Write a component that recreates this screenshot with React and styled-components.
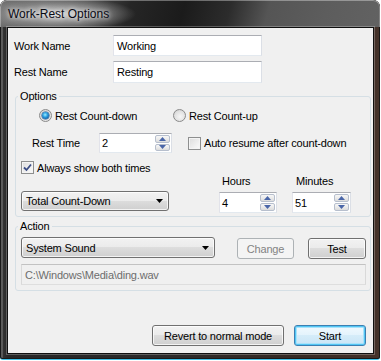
import React from "react";
import styled, { createGlobalStyle, css } from "styled-components";

const GlobalStyle = createGlobalStyle`
  html, body {
    margin: 0;
    padding: 0;
    background: #ffffff;
  }

  body {
    font-family: "Liberation Sans", Arial, sans-serif;
    font-size: 11px;
    letter-spacing: -0.18px;
    color: #000;
  }
`;

const Window = styled.div`
  width: 380px;
  height: 360px;
  box-sizing: border-box;
  display: flex;
  flex-direction: column;
  padding: 0 6px 5px 7px;
  border-radius: 7px 7px 3px 3px;
  border-bottom: 1px solid #3fc2ea;
  background: linear-gradient(
    to right,
    #3c3c3c 0%,
    #262626 2%,
    #2a2a2a 40%,
    #362a23 80%,
    #45322a 100%
  );
  box-shadow: inset 0 0 0 1px #181818, inset 1px 1px 0 2px rgba(255, 255, 255, 0.18);
`;

const TitleBar = styled.div`
  height: 27px;
  flex: none;
  display: flex;
  align-items: center;
  margin: 0 -6px 0 -7px;
  padding: 1px 0 0 8px;
  box-sizing: border-box;
  border-radius: 7px 7px 0 0;
  background:
    radial-gradient(ellipse 78px 17px at 58px 14px, rgba(214, 214, 214, 0.95), rgba(150, 150, 150, 0.55) 65%, rgba(120, 120, 120, 0) 100%),
    linear-gradient(
      105deg,
      #707070 0%,
      #505050 22%,
      #262626 34%,
      #1b1b1b 48%,
      #2c2c2c 60%,
      #555555 70%,
      #5d5d5d 85%,
      #626262 100%
    );
  box-shadow: inset 0 1px 0 rgba(255, 255, 255, 0.35), inset 1px 0 0 rgba(255, 255, 255, 0.3), inset -1px 0 0 rgba(255, 255, 255, 0.2);
`;

const Title = styled.span`
  font-size: 12px;
  letter-spacing: 0;
  color: #0a0a14;
  text-shadow: 0 0 4px rgba(255, 255, 255, 0.9), 0 0 8px rgba(255, 255, 255, 0.6);
`;

const Client = styled.div`
  flex: 1;
  display: flex;
  flex-direction: column;
  background: #f0f0f0;
  border: 1px solid #101010;
  box-shadow: 0 0 0 1px rgba(255, 255, 255, 0.25);
  padding: 7px 7px 7px 0;
`;

const NameRow = styled.div`
  display: flex;
  align-items: center;
  height: 21px;
  padding-left: 6px;
  & + & {
    margin-top: 5px;
  }
`;

const Label = styled.span`
  width: ${(p) => p.$w || "auto"};
  margin-left: ${(p) => p.$ml || 0}px;
  flex: none;
  white-space: nowrap;
`;

const fieldBorder = css`
  box-sizing: border-box;
  border: 1px solid;
  border-color: #abadb3 #dbdfe6 #e3e9ef #e2e3ea;
  background: #fff;
`;

const TextBox = styled.div`
  ${fieldBorder}
  width: ${(p) => p.$w}px;
  height: ${(p) => p.$h || 21}px;
  padding-left: 3px;
  display: flex;
  align-items: center;
  ${(p) =>
    p.$disabled &&
    css`
      background: #f0f0f0;
      border-color: #c2c2c2 #d9d9d9 #dedede #d9d9d9;
      color: #6d6d6d;
    `}
`;

const Group = styled.fieldset`
  margin: ${(p) => p.$mt || 0}px 0 0 7px;
  width: 356px;
  box-sizing: border-box;
  border: 1px solid #d5dfe5;
  border-radius: 3px;
  padding: ${(p) => p.$pad};
  min-width: 0;
`;

const Legend = styled.legend`
  padding: 0 2px;
  line-height: 13px;
  margin-left: -3px;
`;

const Row = styled.div`
  display: flex;
  align-items: ${(p) => p.$align || "center"};
  height: ${(p) => (p.$h ? `${p.$h}px` : "auto")};
  margin-top: ${(p) => p.$mt || 0}px;
  padding-left: ${(p) => p.$pl || 0}px;
`;

const Choice = styled.label`
  display: flex;
  align-items: center;
  gap: 3px;
  width: ${(p) => (p.$w ? `${p.$w}px` : "auto")};
  margin-left: ${(p) => p.$ml || 0}px;
  flex: none;
  white-space: nowrap;
`;

const RadioCircle = styled.span`
  width: 13px;
  height: 13px;
  box-sizing: border-box;
  border-radius: 50%;
  border: 1px solid #8a8a8a;
  background: radial-gradient(circle at 55% 60%, #f6f6f6 0%, #e2e2e2 55%, #c9c9c9 100%);
  display: flex;
  align-items: center;
  justify-content: center;
`;

const RadioDot = styled.span`
  width: 7px;
  height: 7px;
  border-radius: 50%;
  background: radial-gradient(circle at 45% 40%, #9ff0ff 0%, #2d9fe0 40%, #0d5fa8 75%, #0a3f78 100%);
  box-shadow: 0 0 0 0.5px #1d4f85;
`;

const CheckBox = styled.span`
  width: 13px;
  height: 13px;
  box-sizing: border-box;
  border: 1px solid #8e8f8f;
  background: linear-gradient(135deg, #dcdcdc 0%, #ececec 50%, #fbfbfb 100%);
  display: flex;
  align-items: center;
  justify-content: center;
  box-shadow: inset 0 0 0 1px #f4f4f4;
`;

const Spin = styled.div`
  ${fieldBorder}
  width: ${(p) => p.$w}px;
  height: ${(p) => p.$h || 21}px;
  display: flex;
  align-items: stretch;
  padding: 1px 1px 1px 2px;
  flex: none;
`;

const SpinValue = styled.span`
  flex: 1;
  display: flex;
  align-items: center;
`;

const SpinButtons = styled.div`
  width: 15px;
  display: flex;
  flex-direction: column;
  gap: 1px;
`;

const SpinButton = styled.div`
  flex: 1;
  box-sizing: border-box;
  border: 1px solid #b7bfcd;
  border-radius: 2px;
  background: linear-gradient(#f7f7f7 0%, #ebebeb 50%, #dcdcdc 100%);
  display: flex;
  align-items: center;
  justify-content: center;
`;

const buttonFace = css`
  box-sizing: border-box;
  border: 1px solid #707070;
  border-radius: 3px;
  background: linear-gradient(#f2f2f2 0%, #ebebeb 49%, #dddddd 50%, #cfcfcf 100%);
  box-shadow: inset 0 0 0 1px rgba(255, 255, 255, 0.75);
`;

const Combo = styled.div`
  ${buttonFace}
  width: ${(p) => p.$w}px;
  height: ${(p) => p.$h || 21}px;
  display: flex;
  align-items: center;
  justify-content: space-between;
  padding: 0 5px 0 4px;
  flex: none;
  margin-bottom: ${(p) => p.$mb || 0}px;
`;

const Button = styled.div`
  ${buttonFace}
  width: ${(p) => p.$w}px;
  height: 21px;
  margin-left: ${(p) => p.$ml || 0}px;
  margin-top: ${(p) => p.$mt || 0}px;
  display: flex;
  align-items: center;
  justify-content: center;
  flex: none;
  ${(p) =>
    p.$disabled &&
    css`
      border-color: #adb2b5;
      background: #f4f4f4;
      box-shadow: none;
      color: #838383;
    `}
  ${(p) =>
    p.$default &&
    css`
      border-color: #3c7fb1;
      background: linear-gradient(#f1f9fe 0%, #e3f3fc 49%, #d5ecf9 50%, #c9e5f6 100%);
      box-shadow: inset 0 0 0 1px #52c6f4, inset 0 0 0 2px #a9e2fa;
    `}
`;

const TimeColumn = styled.div`
  display: flex;
  flex-direction: column;
  gap: 4px;
  margin-left: ${(p) => p.$ml}px;
`;

const TimeLabel = styled.span`
  line-height: 13px;
  padding-left: ${(p) => p.$pl || 3}px;
`;

const Footer = styled.div`
  margin-top: auto;
  display: flex;
  justify-content: flex-end;
  gap: 10px;
`;

const ArrowUp = () => (
  <svg width="7" height="4" viewBox="0 0 7 4">
    <path d="M0 4 L3.5 0 L7 4 Z" fill="#4a66a8" />
  </svg>
);

const ArrowDown = () => (
  <svg width="7" height="4" viewBox="0 0 7 4">
    <path d="M0 0 L7 0 L3.5 4 Z" fill="#4a66a8" />
  </svg>
);

const ComboArrow = () => (
  <svg width="7" height="4" viewBox="0 0 7 4">
    <path d="M0 0 L7 0 L3.5 4 Z" fill="#000" />
  </svg>
);

const CheckMark = () => (
  <svg width="9" height="9" viewBox="0 0 9 9">
    <path d="M1 4.5 L3.5 7 L8 1.5" fill="none" stroke="#3b4d85" strokeWidth="1.8" />
  </svg>
);

const Radio = ({ checked, children, ...rest }) => (
  <Choice {...rest}>
    <RadioCircle>{checked && <RadioDot />}</RadioCircle>
    {children}
  </Choice>
);

const Check = ({ checked, children, ...rest }) => (
  <Choice {...rest}>
    <CheckBox>{checked && <CheckMark />}</CheckBox>
    {children}
  </Choice>
);

const SpinField = ({ value, w, h }) => (
  <Spin $w={w} $h={h}>
    <SpinValue>{value}</SpinValue>
    <SpinButtons>
      <SpinButton>
        <ArrowUp />
      </SpinButton>
      <SpinButton>
        <ArrowDown />
      </SpinButton>
    </SpinButtons>
  </Spin>
);

export default function App() {
  return (
    <>
      <GlobalStyle />
      <Window>
        <TitleBar>
          <Title>Work-Rest Options</Title>
        </TitleBar>
        <Client>
          <NameRow>
            <Label $w="99px">Work Name</Label>
            <TextBox $w={149}>Working</TextBox>
          </NameRow>
          <NameRow>
            <Label $w="99px">Rest Name</Label>
            <TextBox $w={149} $h={22}>Resting</TextBox>
          </NameRow>

          <Group $mt={8} $pad="6px 0 3px 5px">
            <Legend>Options</Legend>
            <Row $h={13}>
              <Radio checked $ml={18} $w={134}>
                Rest Count-down
              </Radio>
              <Radio>Rest Count-up</Radio>
            </Row>
            <Row $h={20} $mt={11}>
              <Label $w="67px" $ml={11}>
                Rest Time
              </Label>
              <SpinField value="2" w={73} h={20} />
              <Check $ml={16}>Auto resume after count-down</Check>
            </Row>
            <Row $h={13} $mt={8}>
              <Check checked>Always show both times</Check>
            </Row>
            <Row $mt={1} $align="flex-end">
              <Combo $w={148} $h={20} $mb={2}>
                Total Count-Down
                <ComboArrow />
              </Combo>
              <TimeColumn $ml={50}>
                <TimeLabel>Hours</TimeLabel>
                <SpinField value="4" w={58} />
              </TimeColumn>
              <TimeColumn $ml={15}>
                <TimeLabel $pl={4}>Minutes</TimeLabel>
                <SpinField value="51" w={59} />
              </TimeColumn>
            </Row>
          </Group>

          <Group $mt={3} $pad="4px 0 5px 5px">
            <Legend>Action</Legend>
            <Row $h={22} $align="flex-start">
              <Combo $w={194}>
                System Sound
                <ComboArrow />
              </Combo>
              <Button $disabled $w={57} $ml={22} $mt={1}>
                Change
              </Button>
              <Button $w={58} $ml={14} $mt={1}>
                Test
              </Button>
            </Row>
            <Row $mt={5}>
              <TextBox $w={345} $disabled>
                C:\Windows\Media\ding.wav
              </TextBox>
            </Row>
          </Group>

          <Footer>
            <Button $w={132}>Revert to normal mode</Button>
            <Button $w={72} $default>
              Start
            </Button>
          </Footer>
        </Client>
      </Window>
    </>
  );
}
